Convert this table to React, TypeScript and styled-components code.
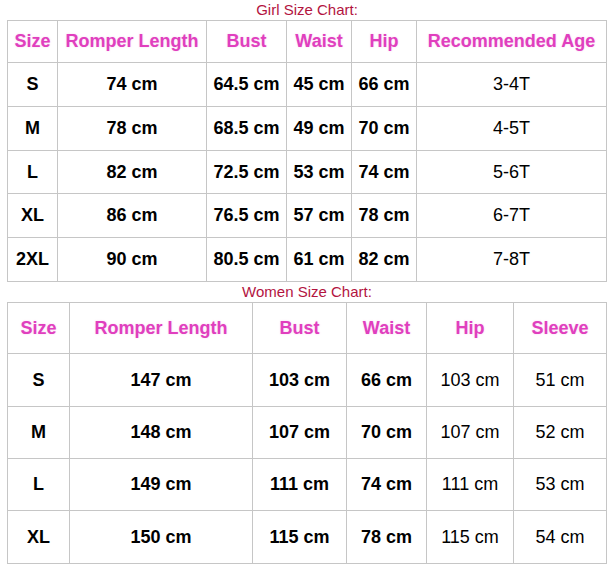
import React from "react";
import styled, { createGlobalStyle } from "styled-components";

type Row = { cells: string[] };

interface ChartProps {
  title: string;
  headers: string[];
  rows: Row[];
  columns: number[];
  heights: number[];
  boldCols: number[];
}

const girlRows: Row[] = [
  { cells: ["S", "74 cm", "64.5 cm", "45 cm", "66 cm", "3-4T"] },
  { cells: ["M", "78 cm", "68.5 cm", "49 cm", "70 cm", "4-5T"] },
  { cells: ["L", "82 cm", "72.5 cm", "53 cm", "74 cm", "5-6T"] },
  { cells: ["XL", "86 cm", "76.5 cm", "57 cm", "78 cm", "6-7T"] },
  { cells: ["2XL", "90 cm", "80.5 cm", "61 cm", "82 cm", "7-8T"] },
];

const womenRows: Row[] = [
  { cells: ["S", "147 cm", "103 cm", "66 cm", "103 cm", "51 cm"] },
  { cells: ["M", "148 cm", "107 cm", "70 cm", "107 cm", "52 cm"] },
  { cells: ["L", "149 cm", "111 cm", "74 cm", "111 cm", "53 cm"] },
  { cells: ["XL", "150 cm", "115 cm", "78 cm", "115 cm", "54 cm"] },
];

function SizeChart({ title, headers, rows, columns, heights, boldCols }: ChartProps) {
  return (
    <Section>
      <Title>{title}</Title>
      <Grid $columns={columns} $heights={heights}>
        {headers.map((h) => (
          <HeadCell key={h}>{h}</HeadCell>
        ))}
        {rows.map((row) =>
          row.cells.map((value, i) => (
            <Cell key={row.cells[0] + i} $bold={boldCols.includes(i)}>
              {value}
            </Cell>
          )),
        )}
      </Grid>
    </Section>
  );
}

export default function App() {
  return (
    <>
      <GlobalStyle />
      <Page>
        <SizeChart
          title="Girl Size Chart:"
          headers={["Size", "Romper Length", "Bust", "Waist", "Hip", "Recommended Age"]}
          rows={girlRows}
          columns={[49, 148, 79, 64, 64, 189]}
          heights={[41, 43, 43, 42, 43, 43]}
          boldCols={[0, 1, 2, 3, 4]}
        />
        <SizeChart
          title="Women Size Chart:"
          headers={["Size", "Romper Length", "Bust", "Waist", "Hip", "Sleeve"]}
          rows={womenRows}
          columns={[61, 182, 93, 79, 86, 92]}
          heights={[50, 52, 51, 51, 52]}
          boldCols={[0, 1, 2, 3]}
        />
      </Page>
    </>
  );
}

const GlobalStyle = createGlobalStyle`
  body {
    margin: 0;
    background: #ffffff;
    font-family: "Liberation Sans", Arial, sans-serif;
  }
`;

const Page = styled("div")`
  width: 616px;
  padding-left: 7px;
  box-sizing: border-box;
`;

const Section = styled("div")`
  display: flex;
  flex-direction: column;
  width: 600px;
`;

const Title = styled("div")`
  height: 20px;
  line-height: 20px;
  text-align: center;
  font-size: 15px;
  color: #b3143f;
`;

const Grid = styled("div")<{ $columns: number[]; $heights: number[] }>`
  display: grid;
  grid-template-columns: ${({ $columns }) => $columns.map((c) => c + "px").join(" ")};
  grid-template-rows: ${({ $heights }) => $heights.map((h) => h + "px").join(" ")};
  gap: 1px;
  padding: 1px;
  background: #c6c6c6;
  width: 600px;
  box-sizing: border-box;
`;

const HeadCell = styled("div")`
  display: flex;
  align-items: center;
  justify-content: center;
  background: #ffffff;
  font-size: 18px;
  font-weight: bold;
  color: #e03fbe;
  text-shadow: 0 0 2px rgba(240, 150, 220, 0.45);
`;

const Cell = styled("div")<{ $bold: boolean }>`
  display: flex;
  align-items: center;
  justify-content: center;
  background: #ffffff;
  font-size: 18px;
  font-weight: ${({ $bold }) => ($bold ? "bold" : "normal")};
  color: #000000;
`;
